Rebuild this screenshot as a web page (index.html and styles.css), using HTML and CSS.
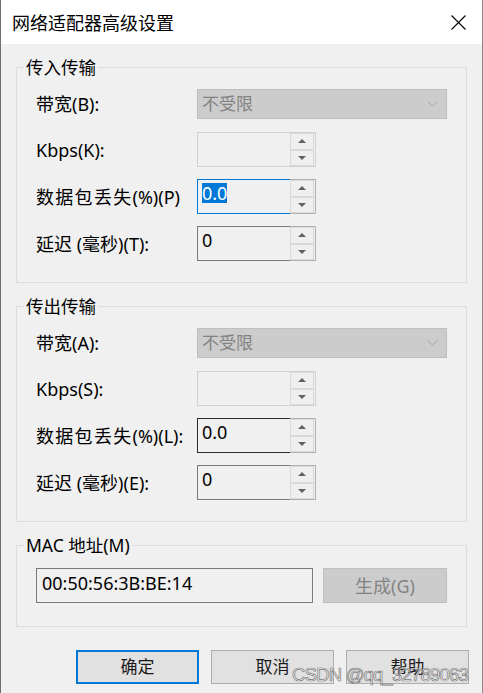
FILE: index.html
```html
<!DOCTYPE html>
<html lang="zh-CN">
<head>
<meta charset="utf-8">
<title>网络适配器高级设置</title>
<link rel="stylesheet" href="styles.css">
</head>
<body>
<div class="window">
  <div class="titlebar">
    <span class="title">网络适配器高级设置</span>
    <svg class="close" width="15" height="15" viewBox="0 0 15 15"><path d="M0.5 0.5L14.5 14.5M14.5 0.5L0.5 14.5" stroke="#000" stroke-width="1.1" fill="none"/></svg>
  </div>
  <div class="content">
    <fieldset class="group">
      <legend>传入传输</legend>
      <div class="rows">
        <div class="row row-combo">
          <span class="label">带宽(B):</span>
          <div class="combo"><span>不受限</span><svg width="11" height="6" viewBox="0 0 11 6"><path d="M0.5 0.5L5.5 5.2L10.5 0.5" stroke="#a6a6a6" stroke-width="1" fill="none"/></svg></div>
        </div>
        <div class="row">
          <span class="label">Kbps(K):</span>
          <div class="spin disabled"><div class="edit"></div><div class="arrows"><span class="sbtn"><i class="up"></i></span><span class="sbtn"><i class="down"></i></span></div></div>
        </div>
        <div class="row">
          <span class="label"><span class="wide">数据包丢失</span>(%)(P)</span>
          <div class="spin focus"><div class="edit"><span class="sel">0.0</span></div><div class="arrows"><span class="sbtn"><i class="up"></i></span><span class="sbtn"><i class="down"></i></span></div></div>
        </div>
        <div class="row">
          <span class="label">延迟 (毫秒)(T):</span>
          <div class="spin"><div class="edit">0</div><div class="arrows"><span class="sbtn"><i class="up"></i></span><span class="sbtn"><i class="down"></i></span></div></div>
        </div>
      </div>
    </fieldset>

    <fieldset class="group">
      <legend>传出传输</legend>
      <div class="rows">
        <div class="row row-combo">
          <span class="label">带宽(A):</span>
          <div class="combo"><span>不受限</span><svg width="11" height="6" viewBox="0 0 11 6"><path d="M0.5 0.5L5.5 5.2L10.5 0.5" stroke="#a6a6a6" stroke-width="1" fill="none"/></svg></div>
        </div>
        <div class="row">
          <span class="label">Kbps(S):</span>
          <div class="spin disabled"><div class="edit"></div><div class="arrows"><span class="sbtn"><i class="up"></i></span><span class="sbtn"><i class="down"></i></span></div></div>
        </div>
        <div class="row">
          <span class="label"><span class="wide">数据包丢失</span>(%)(L):</span>
          <div class="spin hover"><div class="edit">0.0</div><div class="arrows"><span class="sbtn"><i class="up"></i></span><span class="sbtn"><i class="down"></i></span></div></div>
        </div>
        <div class="row">
          <span class="label">延迟 (毫秒)(E):</span>
          <div class="spin"><div class="edit">0</div><div class="arrows"><span class="sbtn"><i class="up"></i></span><span class="sbtn"><i class="down"></i></span></div></div>
        </div>
      </div>
    </fieldset>

    <fieldset class="group mac">
      <legend>MAC 地址(M)</legend>
      <div class="mac-row">
        <div class="mac-input">00:50:56:3B:BE:14</div>
        <div class="btn disabled-btn">生成(G)</div>
      </div>
    </fieldset>

    <div class="buttons">
      <div class="btn default">确定</div>
      <div class="btn">取消</div>
      <div class="btn">帮助</div>
    </div>
  </div>
  <div class="watermark">CSDN @qq_32789063</div>
</div>
</body>
</html>
```

FILE: styles.css
```css
html, body {
  margin: 0;
  padding: 0;
  background: #f0f0f0;
}
.window {
  position: relative;
  width: 483px;
  height: 693px;
  box-sizing: border-box;
  border-left: 1px solid #707070;
  border-right: 1px solid #8a8a8a;
  background: #f0f0f0;
  overflow: hidden;
  font-family: "Noto Sans", "Noto Sans CJK SC", sans-serif;
  font-size: 18px;
  color: #000;
}
.titlebar {
  height: 44px;
  background: #fff;
  display: flex;
  align-items: center;
  justify-content: space-between;
  padding: 0 16px 0 11px;
}
.title {
  font-family: "Noto Sans CJK SC", sans-serif;
  font-size: 18px;
  line-height: 22px;
}
.close {
  display: block;
}
.content {
  display: flex;
  flex-direction: column;
}
.group {
  margin: 13px 15px 0 15px;
  padding: 12px 19px 21px 19px;
  border: 1px solid #dcdcdc;
  min-width: 0;
}
.group legend {
  margin-left: -12px;
  padding: 0 2px;
  line-height: 20px;
  height: 20px;
  font-size: 17.5px;
}
.rows {
  display: flex;
  flex-direction: column;
  gap: 12px;
}
.row {
  display: flex;
  align-items: center;
}
.row-combo {
  margin-bottom: 1px;
}
.label {
  width: 161px;
  flex: none;
  line-height: 20px;
  white-space: nowrap;
}
.wide {
  letter-spacing: 1.3px;
}
.combo {
  box-sizing: border-box;
  width: 251px;
  height: 30px;
  background: #cccccc;
  border: 1px solid #bfbfbf;
  display: flex;
  align-items: center;
  justify-content: space-between;
  padding: 0 8px 0 4px;
  color: #838383;
  line-height: 20px;
  font-size: 17px;
}
.combo svg {
  display: block;
}
.spin {
  display: flex;
  width: 119px;
  height: 35px;
}
.spin .edit {
  flex: 1;
  box-sizing: border-box;
  border: 1px solid #7a7a7a;
  border-right: none;
  padding: 3px 4px;
  line-height: 20px;
  background: #f0f0f0;
}
.spin.focus .edit {
  border-color: #0078d7;
}
.spin.hover .edit {
  border-color: #2b2b2b;
}
.spin.disabled .edit {
  border-color: #d0d0d0;
}
.sel {
  background: #0078d7;
  color: #fff;
  display: inline-block;
  line-height: 20px;
}
.arrows {
  width: 26px;
  box-sizing: border-box;
  border: 1px solid #b0b0b0;
  border-left: none;
  padding: 0 1px 0 0;
  display: flex;
  flex-direction: column;
}
.spin.disabled .arrows {
  border-color: #d0d0d0;
}
.sbtn {
  flex: 1;
  box-sizing: border-box;
  border: 1px solid #d9d9d9;
  background: #efefef;
  display: flex;
  align-items: center;
  justify-content: center;
}
.sbtn i {
  display: block;
  width: 0;
  height: 0;
  border-left: 4px solid transparent;
  border-right: 4px solid transparent;
}
.sbtn i.up {
  border-bottom: 4px solid #606060;
}
.sbtn i.down {
  border-top: 4px solid #606060;
}
.group.mac {
  padding-top: 13px;
  padding-bottom: 23px;
}
.mac-row {
  display: flex;
  align-items: center;
}
.mac-input {
  box-sizing: border-box;
  width: 277px;
  height: 35px;
  border: 1px solid #7a7a7a;
  background: #f0f0f0;
  padding: 3px 5px;
  line-height: 22px;
}
.btn {
  box-sizing: border-box;
  width: 123px;
  height: 34px;
  background: #e1e1e1;
  border: 1px solid #adadad;
  display: flex;
  align-items: center;
  justify-content: center;
  line-height: 20px;
  font-size: 17px;
  color: #1a1a1a;
}
.btn.default {
  border: 2px solid #0078d7;
}
.disabled-btn {
  width: 124px;
  height: 35px;
  margin-left: 10px;
  background: #cccccc;
  border-color: #bfbfbf;
  color: #838383;
  font-size: 18px;
}
.buttons {
  display: flex;
  justify-content: flex-end;
  gap: 12px;
  margin-top: 23px;
  padding-right: 13px;
}
.watermark {
  position: absolute;
  right: 14px;
  bottom: 8px;
  font-family: "Liberation Sans", sans-serif;
  font-size: 18.5px;
  line-height: 20px;
  letter-spacing: -0.8px;
  color: rgba(255, 255, 255, 0.55);
  -webkit-text-stroke: 0.7px rgba(90, 90, 90, 0.8);
}
```
